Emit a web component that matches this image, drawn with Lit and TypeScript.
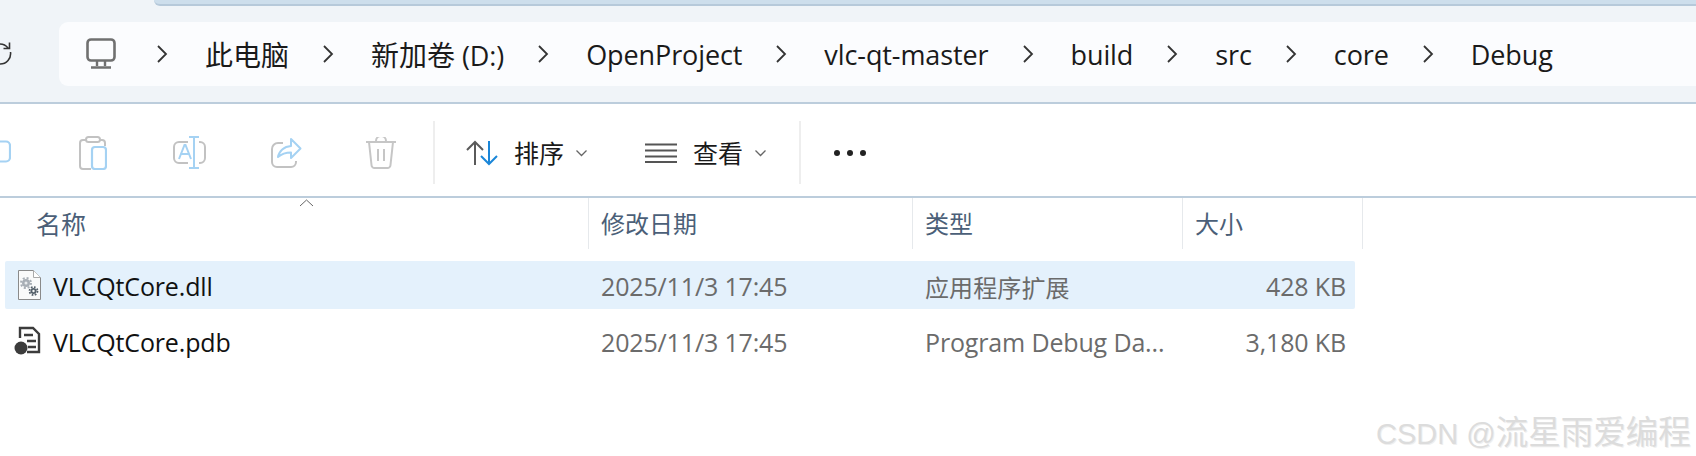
import { LitElement, html, css } from "lit";
import { customElement } from "lit/decorators.js";

const zh = (s: string) => html`<span class="zh">${s}</span>`;
const crumbs = [zh("此电脑"), html`${zh("新加卷")} (D:)`, "OpenProject", "vlc-qt-master", "build", "src", "core", "Debug"];
const chevron = html`<svg class="crumb-sep" width="12" height="20" viewBox="0 0 12 20"><path d="M2 2l8 8-8 8" fill="none" stroke="#333" stroke-width="1.8"/></svg>`;
const down = html`<svg class="down" width="13" height="8" viewBox="0 0 13 8"><path d="M1.5 1.5l5 5 5-5" fill="none" stroke="#666" stroke-width="1.3"/></svg>`;

@customElement("app-root")
export class AppRoot extends LitElement {
  static styles = css`
    :host { display: block; position: relative; width: 1696px; height: 456px; overflow: hidden; background: #fff;
      font-family: "Open Sans", "Noto Sans CJK SC", sans-serif; color: #1a1a1a; }
    .top { height: 102px; background: #f0f4f8; border-bottom: 2px solid #bccddc; display: flex; flex-direction: column; }
    .tabstrip { height: 22px; padding-left: 154px; }
    .tab { height: 4px; background: #cddeec; border-bottom: 2px solid #b6c9da; border-bottom-left-radius: 8px; }
    .addr-row { display: flex; align-items: stretch; }
    .refresh { width: 59px; display: flex; align-items: center; }
    .addr { flex: 1; height: 64px; background: #fbfcfe; border-radius: 9px 0 0 9px; display: flex; align-items: center; padding-left: 27px; font-size: 27px; }
    .pc { margin-right: 40px; flex: none; }
    .crumb-sep { flex: none; margin-right: 37px; }
    .crumb { margin-right: 33px; white-space: nowrap; letter-spacing: -0.1px; }
    .zh { font-size: 28px; letter-spacing: 0; }
    .toolbar { height: 87px; padding-top: 5px; border-bottom: 2px solid #bccddc; display: flex; align-items: center; font-size: 25px; }
    .tool { flex: none; display: flex; }
    .stub { width: 11px; margin-right: 68px; }
    .t1 { margin-right: 66px; }
    .t2 { margin-right: 65px; }
    .t3 { margin-right: 64px; }
    .t4 { margin-right: 37px; }
    .divider { width: 2px; height: 63px; background: #eeeeee; flex: none; }
    .sort { margin: 0 15px 0 31px; }
    .down { margin-left: 11px; }
    .view { margin: 0 16px 0 57px; }
    .d2 { margin-left: 32px; }
    .more { margin-left: 33px; }
    .label { padding-bottom: 2px; }
    .table { position: relative; }
    .head { display: grid; grid-template-columns: 589px 324px 270px 180px; width: 1363px; height: 51px; margin-bottom: 12px; font-size: 24px; color: #4b5f78; }
    .head > div { border-right: 1px solid #e6e9ec; padding-left: 12px; display: flex; align-items: center; padding-bottom: 2px; }
    .head > .h0 { padding-left: 36px; font-size: 25px; }
    .caret { position: absolute; left: 299px; top: 1px; }
    .rows { display: flex; flex-direction: column; gap: 8px; margin-left: 5px; width: 1350px; font-size: 25px; letter-spacing: -0.15px; }
    .row { display: grid; grid-template-columns: 584px 324px 270px 172px; height: 48px; align-items: center; border-radius: 2px; }
    .row.sel { background: #e4f1fc; }
    .name { display: flex; align-items: center; color: #111; }
    .dll-i { margin: 0 12px 0 13px; flex: none; }
    .pdb-i { margin: 0 12px 0 9px; flex: none; }
    .date, .type, .size { color: #6b6b6b; padding-top: 2px; }
    .date, .type { padding-left: 12px; white-space: nowrap; }
    .type.cjk { font-size: 24px; letter-spacing: 0.1px; }
    .size { text-align: right; padding-right: 9px; }
    .name span { padding-top: 2px; }
    .mark { position: absolute; left: 1376px; top: 406px; font-size: 29px; color: #dcdcdc; white-space: nowrap;
      font-family: "Liberation Sans", "Noto Sans CJK SC", sans-serif; text-shadow: 1px 1px 0 #efefef; }
    .mark span { font-size: 32.500px; }
  `;

  render() {
    return html`
      <div class="top">
        <div class="tabstrip"><div class="tab"></div></div>
        <div class="addr-row">
          <div class="refresh">
            <svg width="12" height="26" viewBox="0 0 12 26"><path d="M0 3a10 10 0 0 1 8 4M9.500 1.500v6h-6M10.500 11a10.500 10.500 0 0 1-10.500 12" fill="none" stroke="#333" stroke-width="1.600"/></svg>
          </div>
          <div class="addr">
            <svg class="pc" width="30" height="32" viewBox="0 0 30 32"><rect x="1.500" y="1.500" width="27" height="21" rx="3.500" fill="none" stroke="#707070" stroke-width="2.600"/><path d="M11 23v5M19 23v5M5 29.500h20" fill="none" stroke="#707070" stroke-width="2.400"/></svg>
            ${crumbs.map((c) => html`${chevron}<span class="crumb">${c}</span>`)}
          </div>
        </div>
      </div>
      <div class="toolbar">
        <svg class="tool stub" width="11" height="26" viewBox="0 0 11 26"><path d="M0 1.500h6a4 4 0 0 1 4 4v12a4 4 0 0 1-4 4h-6" fill="none" stroke="#a5d2f3" stroke-width="2.200"/></svg>
        <svg class="tool t1" width="28" height="34" viewBox="0 0 28 34"><path d="M7 4H4a3 3 0 0 0-3 3v23a3 3 0 0 0 3 3h8M21 4h2a3 3 0 0 1 3 3v3" fill="none" stroke="#c2c2c2" stroke-width="2"/><rect x="7" y="1" width="14" height="5" rx="2.500" fill="none" stroke="#c2c2c2" stroke-width="2"/><rect x="13" y="11" width="14" height="22" rx="3" fill="none" stroke="#a5d2f3" stroke-width="2.200"/></svg>
        <svg class="tool t2" width="33" height="33" viewBox="0 0 33 33"><path d="M15 6H6a5 5 0 0 0-5 5v11a5 5 0 0 0 5 5h9M26 6h1a5 5 0 0 1 5 5v11a5 5 0 0 1-5 5h-1" fill="none" stroke="#c2c2c2" stroke-width="2"/><path d="M16 1h10M21 1v31M16 32h10M6 23l5.500-14h1l5.500 14M8 18h8" fill="none" stroke="#a5d2f3" stroke-width="2"/></svg>
        <svg class="tool t3" width="31" height="30" viewBox="0 0 31 30"><path d="M12 5H7a6 6 0 0 0-6 6v13a5 5 0 0 0 5 5h14a5 5 0 0 0 5-5v-1" fill="none" stroke="#c2c2c2" stroke-width="2"/><path d="M20 1l9.500 9.500L20 20v-5.500c-5 0-9 1-13 4.500 1-6 6-10.500 13-11z" fill="none" stroke="#a5d2f3" stroke-width="2" stroke-linejoin="round"/></svg>
        <svg class="tool t4" width="30" height="32" viewBox="0 0 30 32"><path d="M0 5h30M10 5V4a3 3 0 0 1 10 0v1M3 5l2.500 23a3 3 0 0 0 3 3h13a3 3 0 0 0 3-3L27 5M12 12v12M18 12v12" fill="none" stroke="#c6c6c6" stroke-width="2"/></svg>
        <div class="divider"></div>
        <svg class="tool sort" width="33" height="26" viewBox="0 0 33 26"><path d="M9 25V2M1 10l8-8 8 8" fill="none" stroke="#5a5a5a" stroke-width="2"/><path d="M23 1v23M15 16l8 8 8-8" fill="none" stroke="#1a86d8" stroke-width="2"/></svg>
        <span class="label">排序</span>${down}
        <svg class="tool view" width="32" height="20" viewBox="0 0 32 20"><path d="M0 1.500h32M0 7.500h32M0 13.500h32M0 19h32" fill="none" stroke="#555" stroke-width="1.800"/></svg>
        <span class="label">查看</span>${down}
        <div class="divider d2"></div>
        <svg class="tool more" width="32" height="6" viewBox="0 0 32 6"><circle cx="3" cy="3" r="3" fill="#222"/><circle cx="16" cy="3" r="3" fill="#222"/><circle cx="29" cy="3" r="3" fill="#222"/></svg>
      </div>
      <div class="table">
        <svg class="caret" width="15" height="8" viewBox="0 0 15 8"><path d="M1 7l6.500-6 6.500 6" fill="none" stroke="#666" stroke-width="1"/></svg>
        <div class="head"><div class="h0">名称</div><div>修改日期</div><div>类型</div><div>大小</div></div>
        <div class="rows">
          <div class="row sel">
            <div class="name">
              <svg class="dll-i" width="23" height="30" viewBox="0 0 23 30">
                <path d="M.5.500h15l7 7v22H.5z" fill="#fafafa" stroke="#8a8a8a"/><path d="M15.500.500v7h7" fill="#fff" stroke="#aaa"/>
                <circle cx="8" cy="13" r="4" fill="#a8aeb5"/><circle cx="8" cy="13" r="5" fill="none" stroke="#a8aeb5" stroke-width="2" stroke-dasharray="2 1.930"/><circle cx="8" cy="13" r="1.500" fill="#e8eaec"/>
                <circle cx="15.500" cy="21" r="3" fill="#55606a"/><circle cx="15.500" cy="21" r="4" fill="none" stroke="#55606a" stroke-width="1.800" stroke-dasharray="1.700 1.440"/><circle cx="15.500" cy="21" r="1.200" fill="#f4f4f4"/>
              </svg>
              <span>VLCQtCore.dll</span>
            </div>
            <div class="date">2025/11/3 17:45</div><div class="type cjk">应用程序扩展</div><div class="size">428 KB</div>
          </div>
          <div class="row">
            <div class="name">
              <svg class="pdb-i" width="27" height="30" viewBox="0 0 27 30"><path d="M6 12V2h13l6 6v18H13" fill="#fff" stroke="#3c3c3c" stroke-width="2.400"/><path d="M10 9h9M13 15h9M14 21h8" stroke="#3c3c3c" stroke-width="2.400"/><circle cx="7" cy="22" r="6.500" fill="#3c3c3c"/></svg>
              <span>VLCQtCore.pdb</span>
            </div>
            <div class="date">2025/11/3 17:45</div><div class="type">Program Debug Da...</div><div class="size">3,180 KB</div>
          </div>
        </div>
      </div>
      <div class="mark">CSDN @<span>流星雨爱编程</span></div>
    `;
  }
}
